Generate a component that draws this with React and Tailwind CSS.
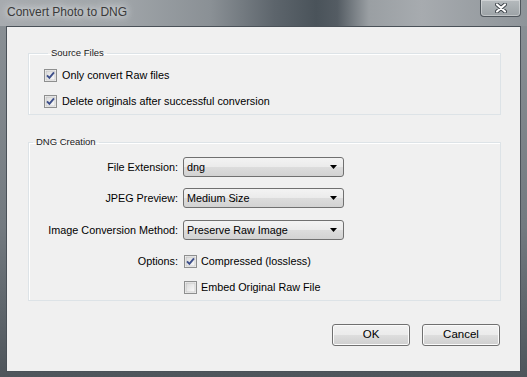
import React from "react";

function Check({ checked }) {
  return (
    <svg width="13" height="13" viewBox="0 0 13 13" className="shrink-0">
      <defs>
        <linearGradient id="cbg" x1="0" y1="0" x2="1" y2="1">
          <stop offset="0" stopColor="#d9d9d9" />
          <stop offset="1" stopColor="#fbfbfb" />
        </linearGradient>
      </defs>
      <rect x="0.5" y="0.5" width="12" height="12" fill="#f4f4f4" stroke="#8e8f8f" />
      <rect x="2" y="2" width="9" height="9" fill="url(#cbg)" stroke="#b8b8b8" strokeWidth="0.6" />
      {checked && (
        <path d="M3 6.3 L5.4 8.9 L10 3.4" fill="none" stroke="#3d4f8a" strokeWidth="1.9" strokeLinejoin="miter" />
      )}
    </svg>
  );
}

function Select({ value }) {
  return (
    <div className="w-[161px] h-[20px] flex items-center justify-between rounded-[3px] border border-[#707070] bg-[linear-gradient(to_bottom,#f3f3f3_0%,#ebebeb_48%,#dcdcdc_52%,#d2d2d2_100%)] pl-[3px] pr-[6px] text-[10.8px] text-black leading-none">
      <span>{value}</span>
      <svg width="7" height="4" viewBox="0 0 7 4">
        <path d="M0 0 H7 L3.5 4 Z" fill="#000" />
      </svg>
    </div>
  );
}

function Button({ children }) {
  return (
    <div className="w-[78px] h-[22px] flex items-center justify-center rounded-[3px] border border-[#707070] bg-[linear-gradient(to_bottom,#f2f2f2_0%,#ebebeb_48%,#dddddd_52%,#cfcfcf_100%)] text-[11.5px] text-black shadow-[inset_0_0_0_1px_#fbfbfb]">
      {children}
    </div>
  );
}

export default function App() {
  return (
    <div className="w-[527px] h-[377px] flex flex-col bg-[linear-gradient(to_bottom,#8c9297_0%,#737a80_60%,#4e555b_100%)] font-['Liberation_Sans',Arial,sans-serif] overflow-hidden">
      <div className="h-[26px] shrink-0 flex items-start bg-[linear-gradient(to_right,#a7abaf_0%,#a1a6aa_22%,#8a9095_40%,#5d656c_52%,#4a535a_60%,#545c63_64%,#9a9fa3_70%,#a7abaf_80%,#8e9499_100%)]">
        <span className="ml-[7px] mt-[5px] text-[12px] leading-[15px] text-[#3a3a3a] [text-shadow:0_0_6px_#e6e8ea,0_0_10px_#e6e8ea]">
          Convert Photo to DNG
        </span>
        <div className="ml-auto mr-[6px] w-[41px] h-[17px] flex items-center justify-center rounded-b-[4px] border border-t-0 border-[#4f565c] bg-[linear-gradient(to_bottom,#b5babd,#9ca2a6)] shadow-[inset_0_0_0_1px_rgba(255,255,255,0.35)]">
          <svg width="12" height="10" viewBox="0 0 12 10">
            <path d="M2 1.5 L10 8.5 M10 1.5 L2 8.5" stroke="#3b4147" strokeWidth="4" strokeLinecap="round" />
            <path d="M2 1.5 L10 8.5 M10 1.5 L2 8.5" stroke="#ffffff" strokeWidth="2.2" strokeLinecap="round" />
          </svg>
        </div>
      </div>
      <div className="flex-1 mx-[6px] mb-[5px] border border-[#4a5158] bg-[#f0f0f0] flex flex-col">
        <fieldset className="ml-[21px] mr-[19px] mt-[20px] border border-[#dde3e7] shadow-[inset_1px_1px_0_#ffffff] pt-[7px] pb-[4px] pl-[15px]">
          <legend className="ml-[4px] px-[3px] text-[9.5px] leading-[12px] text-[#1a1a1a]">Source Files</legend>
          <div className="flex flex-col gap-[8px]">
            <div className="h-[18px] flex items-center gap-[5px] text-[10.8px] text-black">
              <Check checked />
              <span>Only convert Raw files</span>
            </div>
            <div className="h-[18px] flex items-center gap-[5px] text-[10.8px] text-black">
              <Check checked />
              <span>Delete originals after successful conversion</span>
            </div>
          </div>
        </fieldset>
        <fieldset className="ml-[21px] mr-[19px] mt-[21px] border border-[#dde3e7] shadow-[inset_1px_1px_0_#ffffff] pt-[9px] pb-[4px]">
          <legend className="ml-[4px] px-[3px] text-[9.5px] leading-[12px] text-[#1a1a1a]">DNG Creation</legend>
          <div className="flex flex-col text-[10.8px] text-black">
            <div className="flex items-center gap-[5px]">
              <span className="w-[149px] text-right">File Extension:</span>
              <Select value="dng" />
            </div>
            <div className="flex items-center gap-[5px] mt-[11px]">
              <span className="w-[149px] text-right">JPEG Preview:</span>
              <Select value="Medium Size" />
            </div>
            <div className="flex items-center gap-[5px] mt-[12px]">
              <span className="w-[149px] text-right">Image Conversion Method:</span>
              <Select value="Preserve Raw Image" />
            </div>
            <div className="flex items-center h-[18px] mt-[12px]">
              <span className="w-[149px] text-right">Options:</span>
              <span className="ml-[6px]"><Check checked /></span>
              <span className="ml-[4px]">Compressed (lossless)</span>
            </div>
            <div className="flex items-center h-[18px] mt-[8px]">
              <span className="w-[149px]"></span>
              <span className="ml-[6px]"><Check /></span>
              <span className="ml-[4px]">Embed Original Raw File</span>
            </div>
          </div>
        </fieldset>
        <div className="flex justify-end gap-[12px] mt-[23px] mr-[20px]">
          <Button>OK</Button>
          <Button>Cancel</Button>
        </div>
      </div>
    </div>
  );
}
